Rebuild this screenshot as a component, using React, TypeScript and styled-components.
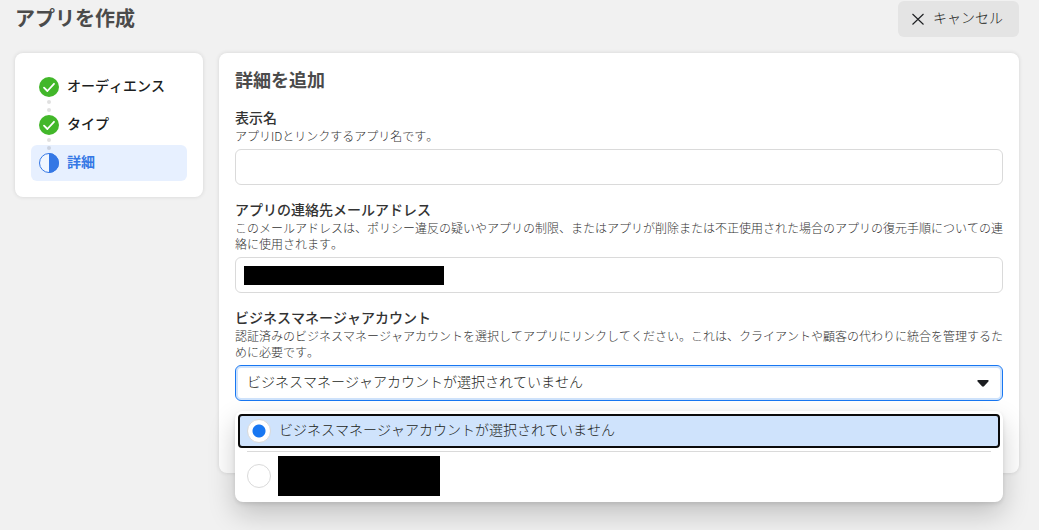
import React, { useState } from "react";
import styled, { createGlobalStyle, css } from "styled-components";

const GlobalStyle = createGlobalStyle`
  *, *::before, *::after { box-sizing: border-box; }
  body {
    margin: 0;
    background: #f1f1f1;
    color: #1c1e21;
    font-family: "Noto Sans CJK JP", "Noto Sans", sans-serif;
    font-size: 14px;
    line-height: 20px;
    font-kerning: none;
  }
  input, select, button { font: inherit; font-kerning: none; color: inherit; }
`;

const Page = styled.div`
  display: flex;
  flex-direction: column;
  gap: 16px;
  min-height: 100vh;
  padding: 1px 20px 56px 15px;
`;

const Header = styled.header`
  display: flex;
  align-items: center;
  justify-content: space-between;
`;

const Title = styled.h1`
  margin: 0;
  padding-bottom: 2px;
  font-size: 20px;
  line-height: 24px;
  font-weight: 700;
  color: #4b4b4b;
`;

const CancelButton = styled.button`
  display: flex;
  align-items: center;
  gap: 7px;
  height: 36px;
  padding: 0 16px 0 12px;
  border: 0;
  border-radius: 6px;
  background: #e4e4e4;
  font-weight: 300;
`;

const Columns = styled.div`
  display: flex;
  align-items: flex-start;
  gap: 16px;
`;

const Card = styled.div`
  background: #ffffff;
  border-radius: 8px;
  box-shadow: 0 0 4px rgba(0, 0, 0, 0.12);
`;

const Sidebar = styled(Card).attrs({ as: "nav" })`
  flex: 0 0 188px;
  padding: 16px;
`;

const StepList = styled.ol`
  display: flex;
  flex-direction: column;
  gap: 2px;
  margin: 0;
  padding: 0;
  list-style: none;
`;

const Step = styled.li<{ $active?: boolean }>`
  position: relative;
  display: flex;
  align-items: center;
  gap: 8px;
  height: 36px;
  padding: 0 8px;
  border-radius: 6px;
  font-weight: 500;
  ${(p) =>
    p.$active &&
    css`
      background: #e7f0ff;
      color: #3578e5;
      font-weight: 700;
    `}
`;

const StepLabel = styled.span`
  padding-bottom: 4px;
`;

const StepIcon = styled.svg`
  width: 20px;
  height: 20px;
  flex: none;
`;

const Connector = styled.span`
  position: absolute;
  left: 16px;
  bottom: -7px;
  z-index: 1;
  display: flex;
  flex-direction: column;
  gap: 4px;

  &::before,
  &::after {
    content: "";
    width: 4px;
    height: 4px;
    border-radius: 50%;
    background: rgba(0, 0, 0, 0.12);
  }
`;

const Form = styled(Card).attrs({ as: "form" })`
  display: flex;
  flex: 1;
  flex-direction: column;
  gap: 16px;
  min-width: 0;
  padding: 16px 16px 72px;
`;

const Heading = styled.h2`
  margin: 0;
  padding-bottom: 4px;
  font-size: 18px;
  line-height: 20px;
  font-weight: 700;
  color: #4b4b4b;
`;

const Field = styled.div`
  display: flex;
  flex-direction: column;
`;

const Label = styled.label`
  padding-bottom: 3px;
  line-height: 16px;
  font-weight: 500;
  color: #333333;
`;

const Hint = styled.p`
  margin: 0 0 5px;
  font-size: 12px;
  line-height: 16px;
  font-weight: 300;
  color: #333333;
`;

const Control = styled.div`
  position: relative;
`;

const control = css`
  display: block;
  width: 100%;
  height: 36px;
  padding: 0 11px 4px;
  border: 1px solid #dadada;
  border-radius: 6px;
  background: #ffffff;
  outline: none;
`;

const TextInput = styled.input`
  ${control}
`;

const Select = styled.select`
  ${control}
  appearance: none;
  border-color: #1877f2;
  box-shadow: inset 0 0 0 2px #cfe3fc;
  font-weight: 300;
`;

const Caret = styled.svg`
  position: absolute;
  right: 14px;
  top: 15px;
  width: 12px;
  height: 7px;
  pointer-events: none;
`;

const Redaction = styled.span<{ $width: number; $height: number }>`
  display: block;
  width: ${(p) => p.$width}px;
  height: ${(p) => p.$height}px;
  background: #000000;
`;

const CoveredValue = styled(Redaction)`
  position: absolute;
  left: 9px;
  top: 9px;
`;

const Menu = styled.div`
  position: absolute;
  top: 46px;
  left: 0;
  right: 0;
  z-index: 2;
  padding: 3px 3px 4px;
  border-radius: 8px;
  background: #ffffff;
  box-shadow: 0 12px 28px rgba(0, 0, 0, 0.2), 0 2px 4px rgba(0, 0, 0, 0.1);
`;

const Option = styled.label<{ $selected: boolean }>`
  display: flex;
  align-items: center;
  gap: 7px;
  padding: 0 7px;
  min-height: 34px;
  border: 2px solid transparent;
  border-radius: 4px;
  font-weight: 300;
  ${(p) =>
    p.$selected &&
    css`
      border-color: #0b0b0b;
      background: #cfe3fc;
    `}
`;

const OptionText = styled.span`
  padding: 0 1px 4px;
`;

const Radio = styled.input`
  appearance: none;
  flex: none;
  width: 24px;
  height: 24px;
  margin: 0;
  border: 1px solid #dadada;
  border-radius: 50%;
  background: #ffffff;

  &:checked {
    background: radial-gradient(circle, #1877f2 6px, #ffffff 7px);
  }
`;

const Divider = styled.hr`
  height: 1px;
  margin: 3px 9px 2px;
  border: 0;
  background: #dadada;
`;

const DoneIcon = () => (
  <StepIcon viewBox="0 0 20 20" aria-hidden="true">
    <circle cx="10" cy="10" r="10" fill="#42b72a" />
    <path
      d="M5 10.6 8.4 14 15 6.8"
      fill="none"
      stroke="#fff"
      strokeWidth="1.8"
      strokeLinecap="round"
      strokeLinejoin="round"
    />
  </StepIcon>
);

const HalfIcon = () => (
  <StepIcon viewBox="0 0 20 20" aria-hidden="true">
    <circle cx="10" cy="10" r="9.5" fill="#fff" fillOpacity="0.4" stroke="#3578e5" />
    <path d="M10 0a10 10 0 0 1 0 20z" fill="#3578e5" />
  </StepIcon>
);

const NONE = "ビジネスマネージャアカウントが選択されていません";

export default function App() {
  const [account, setAccount] = useState("none");

  return (
    <>
      <GlobalStyle />
      <Page>
        <Header>
          <Title>アプリを作成</Title>
          <CancelButton type="button">
            <svg width="16" height="16" viewBox="0 0 16 16" aria-hidden="true">
              <path d="M2.5 3l11 10.500M13.500 3l-11 10.500" stroke="#1c1e21" strokeWidth="1.1" />
            </svg>
            <StepLabel>キャンセル</StepLabel>
          </CancelButton>
        </Header>
        <Columns>
          <Sidebar>
            <StepList>
              <Step>
                <DoneIcon />
                <StepLabel>オーディエンス</StepLabel>
                <Connector />
              </Step>
              <Step>
                <DoneIcon />
                <StepLabel>タイプ</StepLabel>
                <Connector />
              </Step>
              <Step $active aria-current="step">
                <HalfIcon />
                <StepLabel>詳細</StepLabel>
              </Step>
            </StepList>
          </Sidebar>
          <Form>
            <Heading>詳細を追加</Heading>
            <Field>
              <Label htmlFor="name">表示名</Label>
              <Hint>アプリIDとリンクするアプリ名です。</Hint>
              <TextInput id="name" type="text" />
            </Field>
            <Field>
              <Label htmlFor="email">アプリの連絡先メールアドレス</Label>
              <Hint>
                このメールアドレスは、ポリシー違反の疑いやアプリの制限、またはアプリが削除または不正使用された場合のアプリの復元手順についての連絡に使用されます。
              </Hint>
              <Control>
                <TextInput id="email" type="email" />
                <CoveredValue $width={200} $height={19} />
              </Control>
            </Field>
            <Field>
              <Label htmlFor="account">ビジネスマネージャアカウント</Label>
              <Hint>
                認証済みのビジネスマネージャアカウントを選択してアプリにリンクしてください。これは、クライアントや顧客の代わりに統合を管理するために必要です。
              </Hint>
              <Control>
                <Select id="account" value={account} onChange={(e) => setAccount(e.target.value)}>
                  <option value="none">{NONE}</option>
                  <option value="business" />
                </Select>
                <Caret viewBox="0 0 12 7" aria-hidden="true">
                  <path d="M1.2 0h9.6c.9 0 1.2.9.6 1.5L7 6.2c-.5.6-1.5.6-2 0L.6 1.5C0 .9.3 0 1.2 0z" fill="#1c1e21" />
                </Caret>
                <Menu role="radiogroup" aria-label="ビジネスマネージャアカウント">
                  <Option $selected={account === "none"}>
                    <Radio
                      type="radio"
                      name="account-option"
                      checked={account === "none"}
                      onChange={() => setAccount("none")}
                    />
                    <OptionText>{NONE}</OptionText>
                  </Option>
                  <Divider />
                  <Option $selected={account === "business"}>
                    <Radio
                      type="radio"
                      name="account-option"
                      checked={account === "business"}
                      onChange={() => setAccount("business")}
                    />
                    <Redaction $width={162} $height={40} />
                  </Option>
                </Menu>
              </Control>
            </Field>
          </Form>
        </Columns>
      </Page>
    </>
  );
}
